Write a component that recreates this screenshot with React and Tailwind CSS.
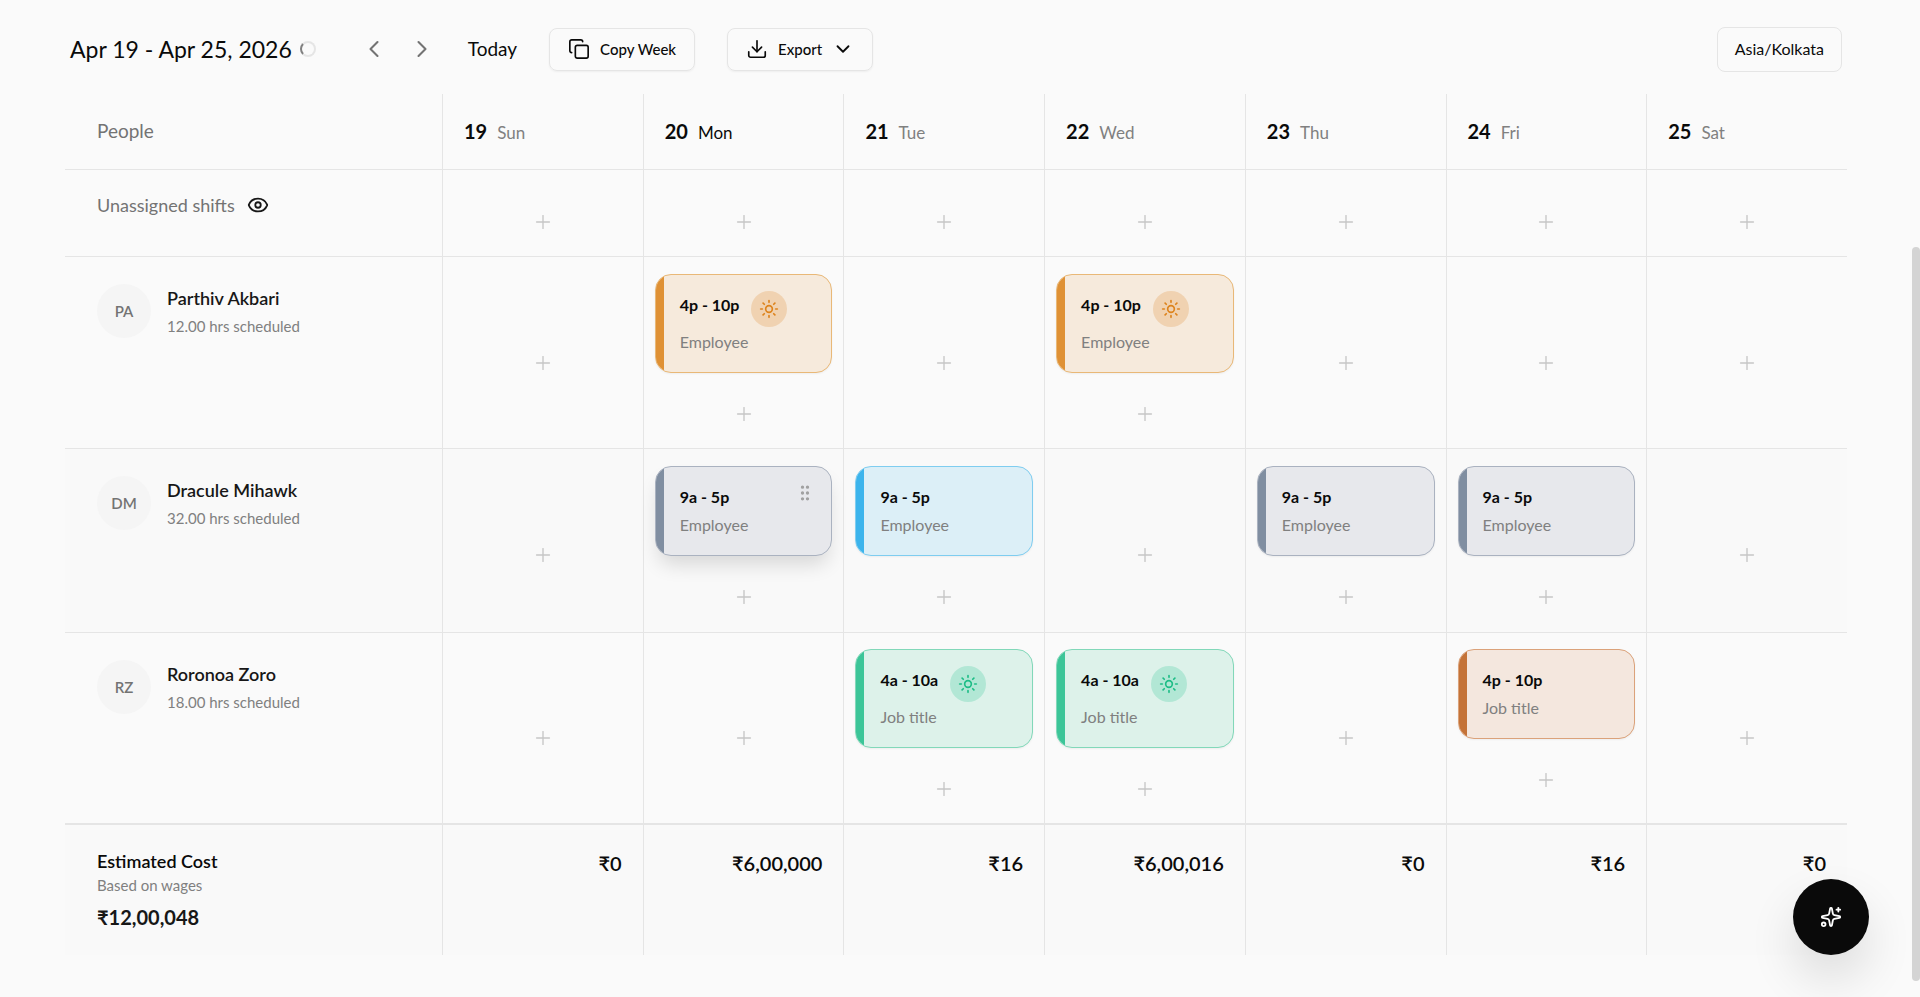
import { ChevronDown, ChevronLeft, ChevronRight, Copy, Download, Eye, GripVertical, Plus, Sparkles, Sun } from "lucide-react";

const themes = {
  orange: { card: "bg-[#f6eadc] border-[#e9b877]", bar: "bg-[#df9135]", badge: "bg-[#f0d2b1] text-[#dd831c]" },
  slate: { card: "bg-[#e7e8ec] border-[#aab2c0]", bar: "bg-[#808ea1]", badge: "bg-slate-300 text-slate-600" },
  sky: { card: "bg-[#dceff7] border-[#7fcdf0]", bar: "bg-[#3cb4ec]", badge: "bg-sky-200 text-sky-600" },
  green: { card: "bg-[#ddf2ea] border-[#82d8b9]", bar: "bg-[#3cc598]", badge: "bg-[#b2e7d5] text-[#1dbd86]" },
  rust: { card: "bg-[#f4e7de] border-[#dba27a]", bar: "bg-[#c47338]", badge: "bg-orange-200 text-orange-700" },
};

const days = [
  { date: 19, name: "Sun", cost: "₹0" },
  { date: 20, name: "Mon", cost: "₹6,00,000", today: true },
  { date: 21, name: "Tue", cost: "₹16" },
  { date: 22, name: "Wed", cost: "₹6,00,016" },
  { date: 23, name: "Thu", cost: "₹0" },
  { date: 24, name: "Fri", cost: "₹16" },
  { date: 25, name: "Sat", cost: "₹0" },
];

const people = [
  {
    initials: "PA",
    name: "Parthiv Akbari",
    hours: "12.00 hrs scheduled",
    shifts: {
      20: { time: "4p - 10p", role: "Employee", theme: "orange", sun: true },
      22: { time: "4p - 10p", role: "Employee", theme: "orange", sun: true },
    },
  },
  {
    initials: "DM",
    name: "Dracule Mihawk",
    hours: "32.00 hrs scheduled",
    shifts: {
      20: { time: "9a - 5p", role: "Employee", theme: "slate", lifted: true },
      21: { time: "9a - 5p", role: "Employee", theme: "sky" },
      23: { time: "9a - 5p", role: "Employee", theme: "slate" },
      24: { time: "9a - 5p", role: "Employee", theme: "slate" },
    },
  },
  {
    initials: "RZ",
    name: "Roronoa Zoro",
    hours: "18.00 hrs scheduled",
    shifts: {
      21: { time: "4a - 10a", role: "Job title", theme: "green", sun: true },
      22: { time: "4a - 10a", role: "Job title", theme: "green", sun: true },
      24: { time: "4p - 10p", role: "Job title", theme: "rust" },
    },
  },
];

function AddButton({ tall }) {
  return (
    <button
      type="button"
      aria-label="Add shift"
      className={`flex w-full items-center justify-center text-[#c6c6c6] ${tall ? "h-[166px] pt-3" : "h-[69px]"}`}
    >
      <Plus size={22} strokeWidth={1.5} />
    </button>
  );
}

function ShiftCard({ shift }) {
  const theme = themes[shift.theme];
  return (
    <article
      className={`mb-[6px] flex overflow-hidden rounded-2xl border ${theme.card} ${shift.lifted ? "shadow-[0_12px_20px_-4px_rgba(0,0,0,0.14)]" : "shadow-xs"}`}
    >
      <div className={`w-2 shrink-0 ${theme.bar}`} />
      <div className="flex-1 px-4 pt-4 pb-5">
        <div className="flex items-start gap-3">
          <h3 className="text-base leading-[27px] font-bold text-[#0a0a0a]">{shift.time}</h3>
          {shift.sun && (
            <span className={`flex size-9 items-center justify-center rounded-full ${theme.badge}`}>
              <Sun size={20} strokeWidth={2} />
            </span>
          )}
          {shift.lifted && <GripVertical size={20} className="ml-auto text-[#a1a1a1]" />}
        </div>
        <p className="mt-1 text-base leading-[21px] text-[#808080]">{shift.role}</p>
      </div>
    </article>
  );
}

export default function App() {
  return (
    <div className="min-h-screen bg-[#fafafa] font-[Lato,sans-serif] text-[#0a0a0a]">
      <header className="flex h-[94px] items-center pt-1 pr-[78px] pl-[70px]">
        <h1 className="text-[23px] leading-8">Apr 19 - Apr 25, 2026</h1>
        <span role="status" aria-label="Loading" className="ml-2 size-4 rounded-full border-2 border-[#e5e5e5] border-l-[#808080]" />
        <nav className="ml-11 flex items-center gap-5 text-[#737373]" aria-label="Week">
          <button type="button" aria-label="Previous week"><ChevronLeft size={28} strokeWidth={1.8} /></button>
          <button type="button" aria-label="Next week"><ChevronRight size={28} strokeWidth={1.8} /></button>
        </nav>
        <button type="button" className="ml-8 text-[19px]">Today</button>
        <button type="button" className="ml-8 flex h-[43px] items-center gap-[10px] rounded-lg border border-[#e5e5e5] px-[18px] text-[15px] font-medium shadow-xs">
          <Copy size={22} strokeWidth={1.8} />
          Copy Week
        </button>
        <button type="button" className="ml-8 flex h-[43px] items-center gap-[10px] rounded-lg border border-[#e5e5e5] px-[18px] text-[15px] font-medium shadow-xs">
          <Download size={22} strokeWidth={1.8} />
          Export
          <ChevronDown size={22} strokeWidth={2} />
        </button>
        <button type="button" className="ml-auto h-[45px] rounded-lg border border-[#e5e5e5] px-[17px] text-base">Asia/Kolkata</button>
      </header>

      <main className="pr-[73px] pl-[65px]">
        <table className="w-full table-fixed border-separate border-spacing-0 text-left">
          <thead>
            <tr className="h-[76px]">
              <th scope="col" className="w-[377px] border-b border-[#e5e5e5] pl-8 text-[19px] font-normal text-[#737373]">People</th>
              {days.map((day) => (
                <th key={day.date} scope="col" className="border-b border-l border-[#e5e5e5] pl-[21px] font-normal">
                  <span className="text-xl font-bold">{day.date}</span>
                  <span className={`ml-[10px] text-[17px] ${day.today ? "" : "text-[#808080]"}`}>{day.name}</span>
                </th>
              ))}
            </tr>
          </thead>
          <tbody>
            <tr>
              <th scope="row" className="border-b border-[#e5e5e5] pt-[21px] pl-8 align-top font-normal text-[#737373]">
                <div className="flex items-center gap-3">
                  <span className="text-lg">Unassigned shifts</span>
                  <button type="button" aria-label="Toggle unassigned shifts" className="text-[#171717]">
                    <Eye size={22} />
                  </button>
                </div>
              </th>
              {days.map((day) => (
                <td key={day.date} className="border-b border-l border-[#e5e5e5] pt-[17px] align-top">
                  <AddButton />
                </td>
              ))}
            </tr>
            {people.map((person) => (
              <tr key={person.initials} className="group even:bg-[#fafafa] odd:bg-[#f9f9f9]">
                <th scope="row" className="border-b border-[#e5e5e5] pt-[27px] pl-8 align-top font-normal group-last:border-b-2">
                  <div className="flex gap-4">
                    <span className="flex size-[54px] items-center justify-center rounded-full bg-[#f5f5f5] text-[15px] font-semibold text-[#737373]">
                      {person.initials}
                    </span>
                    <div>
                      <h2 className="text-lg leading-7 font-semibold text-[#171717]">{person.name}</h2>
                      <p className="text-[15px] leading-7 text-[#808080]">{person.hours}</p>
                    </div>
                  </div>
                </th>
                {days.map((day) => {
                  const shift = person.shifts[day.date];
                  return (
                    <td key={day.date} className="border-b border-l border-[#e5e5e5] px-[11px] pt-[17px] align-top group-last:border-b-2 group-last:pt-4">
                      {shift && <ShiftCard shift={shift} />}
                      <AddButton tall={!shift} />
                    </td>
                  );
                })}
              </tr>
            ))}
          </tbody>
          <tfoot>
            <tr className="h-[130px] bg-[#f9f9f9]">
              <th scope="row" className="pt-6 pl-8 align-top font-normal">
                <p className="text-lg leading-6 font-semibold">Estimated Cost</p>
                <p className="text-[15px] leading-6 text-[#808080]">Based on wages</p>
                <p className="mt-[6px] text-xl leading-7 font-bold text-[#171717]">₹12,00,048</p>
              </th>
              {days.map((day) => (
                <td key={day.date} className="border-l border-[#e5e5e5] pt-6 pr-[21px] text-right align-top text-xl leading-7 font-semibold">
                  {day.cost}
                </td>
              ))}
            </tr>
          </tfoot>
        </table>
      </main>

      <button
        type="button"
        aria-label="Open assistant"
        className="fixed right-[51px] bottom-[42px] flex size-[76px] items-center justify-center rounded-full bg-[#0a0a0a] text-white shadow-[0_24px_48px_rgba(0,0,0,0.12)]"
      >
        <Sparkles size={22} />
      </button>
      <div aria-hidden="true" className="fixed top-[247px] right-0 bottom-4 w-2 rounded-full bg-[#d4d4d4]" />
    </div>
  );
}
